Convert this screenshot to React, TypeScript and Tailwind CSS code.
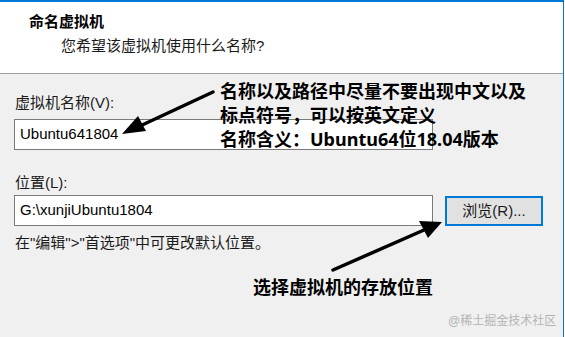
import React from "react";

const font = { fontFamily: '"Liberation Sans", "Noto Sans CJK SC", sans-serif' };
const boldFont = { fontFamily: '"Noto Sans", "Noto Sans CJK SC", sans-serif' };

export default function App() {
  return (
    <div className="w-[565px] h-[337px] overflow-hidden bg-white" style={font}>
      <div className="relative flex h-full w-[564px] flex-col border-t-2 border-r border-[#0078d7] bg-[#f0f0f0]">
        <div className="h-[72px] shrink-0 border-b border-[#a0a0a0] bg-white pl-[29px] pt-[10px]">
          <p className="text-[15px] font-bold leading-[20px] text-black">命名虚拟机</p>
          <p className="mt-[4px] pl-[32px] text-[15px] leading-[20px] text-[#1a1a1a]">您希望该虚拟机使用什么名称?</p>
        </div>

        <div className="flex flex-col px-[14px] pt-[19px] text-[15px] text-[#1a1a1a]">
          <label className="pl-[1px] leading-[20px]">虚拟机名称(V):</label>
          <div className="mt-[6px] flex h-[31px] w-[419px] items-center border border-[#7a7a7a] bg-white pl-[5px] text-[15px] text-black">
            Ubuntu641804
          </div>

          <label className="mt-[23px] pl-[1px] leading-[20px]">位置(L):</label>
          <div className="mt-[2px] flex items-start gap-[12px]">
            <div className="flex h-[31px] w-[419px] items-center border border-[#7a7a7a] bg-white pl-[5px] text-[15px] text-black">
              G:\xunjiUbuntu1804
            </div>
            <button className="mt-[1px] flex h-[30px] w-[98px] items-center justify-center border-2 border-[#0078d7] bg-[#e1e1e1] text-[15px] text-[#1a1a1a]">
              浏览(R)...
            </button>
          </div>
          <p className="mt-[7px] pl-[1px] leading-[20px]">在"编辑"&gt;"首选项"中可更改默认位置。</p>
        </div>

        <div className="absolute left-[220px] top-[77px] text-[18px] font-bold leading-[24px] text-black" style={boldFont}>
          <p>名称以及路径中尽量不要出现中文以及</p>
          <p>标点符号，可以按英文定义</p>
          <p>名称含义：Ubuntu64位18.04版本</p>
        </div>

        <p className="absolute left-[253px] top-[273px] text-[18px] font-bold leading-[24px] text-black" style={boldFont}>选择虚拟机的存放位置</p>

        <p className="absolute left-[448px] top-[311px] text-[12px] leading-[16px] text-[#b4b4b4]">@稀土掘金技术社区</p>

        <svg className="pointer-events-none absolute left-0 top-[-2px]" width="565" height="337" viewBox="0 0 565 337">
          <line x1="213" y1="92" x2="140" y2="126" stroke="#000" strokeWidth="3.5" strokeLinecap="round" />
          <polygon points="122,134 138,116 146,131" fill="#000" />
          <line x1="333" y1="270" x2="424" y2="230" stroke="#000" strokeWidth="3.5" strokeLinecap="round" />
          <polygon points="442,222 419,221 428,238" fill="#000" />
        </svg>
      </div>
    </div>
  );
}
